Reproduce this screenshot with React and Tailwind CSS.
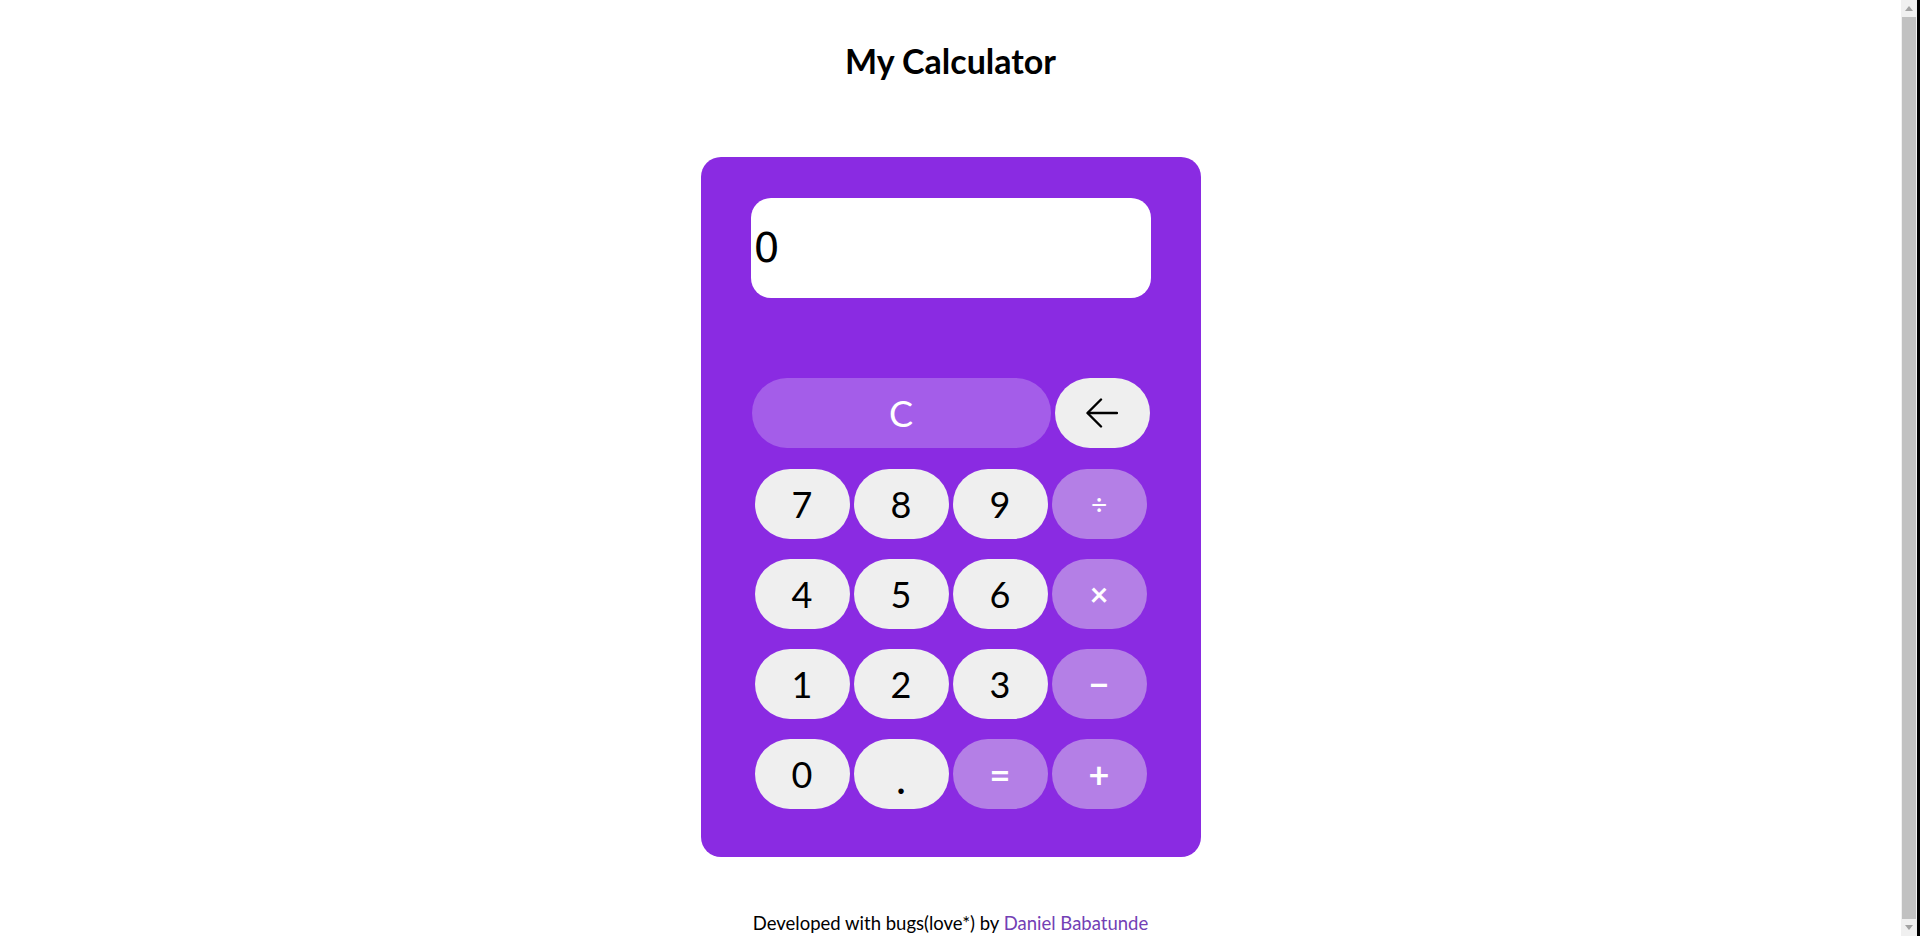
import React from "react";

const numBtn =
  "w-[95px] h-[70px] rounded-full bg-[#efefef] text-black flex items-center justify-center text-[36px] leading-none";
const opBtn =
  "w-[95px] h-[70px] rounded-full bg-[#b47fe6] text-white flex items-center justify-center text-[36px] font-bold leading-none";

function Backspace() {
  return (
    <svg width="32" height="30" viewBox="0 0 32 30" fill="none">
      <path d="M31 15H2" stroke="#000" strokeWidth="2.4" strokeLinecap="round" />
      <path d="M15 1.5L1.5 15L15 28.5" stroke="#000" strokeWidth="2.4" strokeLinecap="round" strokeLinejoin="round" />
    </svg>
  );
}

export default function App() {
  const rows = [
    [["7", "n"], ["8", "n"], ["9", "n"], ["÷", "o"]],
    [["4", "n"], ["5", "n"], ["6", "n"], ["×", "o"]],
    [["1", "n"], ["2", "n"], ["3", "n"], ["−", "o"]],
    [["0", "n"], [".", "n"], ["=", "o"], ["+", "o"]],
  ];
  return (
    <div className="flex h-[936px] w-[1920px] overflow-hidden bg-white" style={{ fontFamily: "Lato, 'Open Sans', sans-serif" }}>
      <div className="flex-1 flex flex-col items-center">
        <h1 className="mt-[41px] text-[34px] leading-[40px] font-bold text-black">My Calculator</h1>
        <div className="mt-[76px] w-[500px] h-[700px] rounded-[20px] bg-[#8a2be2] pt-[41px] px-[50px] flex flex-col">
          <div className="h-[100px] rounded-[20px] bg-white flex items-center pl-[3px]">
            <span className="text-[41px] leading-none text-black" style={{ fontFamily: "'DejaVu Sans', sans-serif" }}>0</span>
          </div>
          <div className="mt-[80px] flex gap-[4px] pl-[1px]">
            <button className="w-[299px] h-[70px] rounded-full bg-[#a45de9] text-white text-[36px] leading-none flex items-center justify-center">C</button>
            <button className="w-[95px] h-[70px] rounded-full bg-[#efefef] flex items-center justify-center">
              <Backspace />
            </button>
          </div>
          <div className="mt-[21px] grid grid-cols-[repeat(4,95px)] gap-x-[4px] gap-y-[20px] justify-center">
            {rows.flat().map(([label, kind], i) => (
              <button key={i} className={kind === "n" ? numBtn : opBtn}>
                {label === "÷" ? <span className="text-[28px] font-normal">÷</span> : label === "×" ? <span className="text-[32px]">×</span> : label === "." ? <span className="mt-[12px] font-bold">.</span> : label}
              </button>
            ))}
          </div>
        </div>
        <p className="mt-[53px] text-[18.5px] leading-[26px] text-black">
          Developed with bugs(love*) by <span className="text-[#7340b5]">Daniel Babatunde</span>
        </p>
      </div>
      <div className="w-[16px] h-full bg-[#f0f0f0] flex flex-col">
        <div className="h-[17px] flex items-center justify-center">
          <svg width="8" height="5" viewBox="0 0 8 5"><path d="M0 5L4 0L8 5Z" fill="#a3a3a3" /></svg>
        </div>
        <div className="flex-1 mx-[1px] bg-[#c1c1c1]" />
        <div className="h-[17px] flex items-center justify-center">
          <svg width="8" height="5" viewBox="0 0 8 5"><path d="M0 0L4 5L8 0Z" fill="#a3a3a3" /></svg>
        </div>
      </div>
      <div className="w-[3px] h-full bg-black" />
    </div>
  );
}
